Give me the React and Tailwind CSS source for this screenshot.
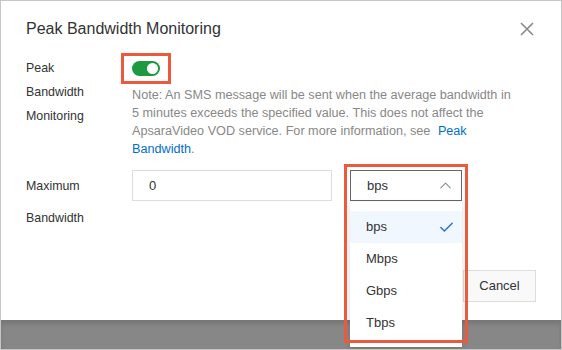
import React from "react";
import { ChevronUp, Check } from "lucide-react";

const units = ["bps", "Mbps", "Gbps", "Tbps"];

export default function App() {
  return (
    <div
      className="w-[562px] h-[350px] border border-[#c6c6c6] bg-white flex flex-col overflow-hidden relative"
      style={{ fontFamily: '"Liberation Sans", Arial, sans-serif' }}
    >
      <div className="flex-1 px-[25px] pt-[16px]">
        {/* Header */}
        <div className="flex items-center justify-between h-[24px]">
          <h1 className="text-[16px] leading-[24px] text-[#333]">Peak Bandwidth Monitoring</h1>
          <svg width="16" height="16" viewBox="0 0 16 16" className="mr-[1px]">
            <path d="M2 2L14 14M14 2L2 14" stroke="#888" strokeWidth="1.6" />
          </svg>
        </div>

        {/* Peak monitoring row */}
        <div className="flex mt-[15px] text-[12.4px]">
          <div className="w-[106px] shrink-0 leading-[24px] text-[#333]">
            <div>Peak</div>
            <div>Bandwidth</div>
            <div>Monitoring</div>
          </div>
          <div>
            <div className="h-[24px] flex items-center">
              <div className="relative">
                <div className="w-[28px] h-[15px] rounded-full bg-[#1d9a3f] flex items-center justify-end pr-[2px]">
                  <div className="w-[11px] h-[11px] rounded-full bg-white" />
                </div>
                <div className="absolute -left-[11px] -right-[11px] -top-[8px] -bottom-[8px] border-[3px] border-[#eb5a3a]" />
              </div>
            </div>
            <div className="mt-[6px] leading-[18px] text-[#888] text-[12.65px]">
              <div className="whitespace-nowrap">Note: An SMS message will be sent when the average bandwidth in</div>
              <div className="whitespace-nowrap">5 minutes exceeds the specified value. This does not affect the</div>
              <div className="whitespace-nowrap">
                ApsaraVideo VOD service. For more information, see <span className="ml-[4px] text-[#0070cc]">Peak</span>
              </div>
              <div>
                <span className="text-[#0070cc]">Bandwidth</span>.
              </div>
            </div>
          </div>
        </div>

        {/* Maximum bandwidth row */}
        <div className="flex mt-[12px] text-[12.4px]">
          <div className="w-[106px] shrink-0 leading-[32px] text-[#333]">
            <div>Maximum</div>
            <div>Bandwidth</div>
          </div>
          <div className="flex items-start">
            <div className="w-[200px] h-[31px] border border-[#ddd] flex items-center pl-[16px] text-[#333] text-[13px]">0</div>
            <div className="relative ml-[18px] z-10">
              <div className="w-[112px] h-[31px] border border-[#666] bg-white flex items-center justify-between pl-[16px] pr-[6px] text-[13px] text-[#333]">
                <span>bps</span>
                <ChevronUp size={19} strokeWidth={1.3} color="#888" />
              </div>
              <div className="absolute left-0 top-[32px] w-[112px] bg-white shadow-[0_2px_6px_rgba(0,0,0,0.15)] pt-[9px] pb-[8px]">
                {units.map((u, i) => (
                  <div
                    key={u}
                    className={`h-[32px] flex items-center justify-between pl-[16px] pr-[7px] text-[13px] text-[#333] ${i === 0 ? "bg-[#f1f7fe]" : ""}`}
                  >
                    <span>{u}</span>
                    {i === 0 && <Check size={17} strokeWidth={2} color="#2a6dc8" />}
                  </div>
                ))}
              </div>
              <div className="absolute -left-[6px] -right-[6px] -top-[6px] h-[179px] border-[3px] border-[#eb5a3a]" />
            </div>
          </div>
        </div>

        {/* Footer buttons */}
        <div className="flex justify-end mt-[36px]">
          <button className="w-[73px] h-[32px] border border-[#ddd] bg-[#f9f9f9] text-[13px] text-[#333]">Cancel</button>
        </div>
      </div>

      <div className="h-[29px] bg-[#878787] shadow-[inset_0_4px_4px_rgba(0,0,0,0.12)]" />
    </div>
  );
}
